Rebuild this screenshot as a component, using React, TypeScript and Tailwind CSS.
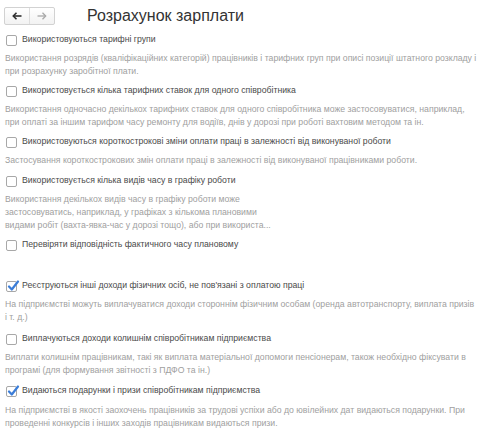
import React from "react";

function Box({ checked }: { checked?: boolean }) {
  return (
    <span className="relative inline-block w-[11px] h-[11px] shrink-0 rounded-[2px] border border-[#a8a8a8] bg-white">
      {checked && (
        <svg className="absolute left-[0px] top-[-2px]" width="13" height="12" viewBox="0 0 13 12">
          <path d="M2 6.5 L4.8 9.5 L11 1.5" fill="none" stroke="#3b7dd8" strokeWidth="2.2" strokeLinecap="round" strokeLinejoin="round" />
        </svg>
      )}
    </span>
  );
}

function Row({ label, checked, className = "" }: { label: string; checked?: boolean; className?: string }) {
  return (
    <div className={"flex items-center gap-[5px] h-[14px] pl-[6px] text-[8.7px] text-[#4a4a4a] " + className}>
      <Box checked={checked} />
      <span className="whitespace-nowrap">{label}</span>
    </div>
  );
}

function Desc({ lines, className = "" }: { lines: string[]; className?: string }) {
  return (
    <div className={"mt-[5px] pl-[5px] text-[8.7px] leading-[13px] text-[#a0a0a0] " + className}>
      {lines.map((l, i) => (
        <div key={i} className="whitespace-nowrap">{l}</div>
      ))}
    </div>
  );
}

export default function App() {
  return (
    <div className="w-[504px] h-[428px] overflow-hidden bg-white" style={{ fontFamily: '"Liberation Sans", Arial, sans-serif' }}>
      <div className="flex items-center h-[32px] pl-[4px]">
        <div className="flex h-[18px] w-[51px] rounded-[2px] border border-[#d2d2d2] bg-gradient-to-b from-white to-[#f2f2f2]">
          <div className="flex flex-1 items-center justify-center border-r border-[#dedede]">
            <svg width="10" height="8" viewBox="0 0 10 8">
              <path d="M1.5 4 H9.5" stroke="#2e2e2e" strokeWidth="1.6" />
              <path d="M4.5 0.8 L1.3 4 L4.5 7.2" fill="none" stroke="#2e2e2e" strokeWidth="1.6" />
            </svg>
          </div>
          <div className="flex flex-1 items-center justify-center">
            <svg width="10" height="8" viewBox="0 0 10 8">
              <path d="M0.5 4 H8.5" stroke="#a8a8a8" strokeWidth="1.3" />
              <path d="M5.5 0.8 L8.7 4 L5.5 7.2" fill="none" stroke="#a8a8a8" strokeWidth="1.3" />
            </svg>
          </div>
        </div>
        <div className="ml-[32px] text-[16px] text-[#333]">Розрахунок зарплати</div>
      </div>

      <div className="flex flex-col pt-[1px]">
        <Row label="Використовуються тарифні групи" />
        <Desc
          lines={[
            "Використання розрядів (кваліфікаційних категорій) працівників і тарифних груп при описі позиції штатного розкладу і",
            "при розрахунку заробітної плати.",
          ]}
        />

        <Row className="mt-[6px]" label="Використовується кілька тарифних ставок для одного співробітника" />
        <Desc
          lines={[
            "Використання одночасно декількох тарифних ставок для одного співробітника може застосовуватися, наприклад,",
            "при оплаті за іншим тарифом часу ремонту для водіїв, днів у дорозі при роботі вахтовим методом та ін.",
          ]}
        />

        <Row className="mt-[6px]" label="Використовуються короткострокові зміни оплати праці в залежності від виконуваної роботи" />
        <Desc lines={["Застосування короткострокових змін оплати праці в залежності від виконуваної працівниками роботи."]} />

        <Row className="mt-[7px]" label="Використовується кілька видів часу в графіку роботи" />
        <Desc
          lines={[
            "Використання декількох видів часу в графіку роботи може",
            "застосовуватись, наприклад, у графіках з кількома плановими",
            "видами робіт (вахта-явка-час у дорозі тощо), або при використа...",
          ]}
        />

        <Row className="mt-[6px]" label="Перевіряти відповідність фактичного часу плановому" />

        <Row className="mt-[27px]" checked label="Реєструються інші доходи фізичних осіб, не пов'язані з оплатою праці" />
        <Desc
          lines={[
            "На підприємстві можуть виплачуватися доходи стороннім фізичним особам (оренда автотранспорту, виплата призів",
            "і т. д.)",
          ]}
        />

        <Row className="mt-[8px]" label="Виплачуються доходи колишнім співробітникам підприємства" />
        <Desc
          lines={[
            "Виплати колишнім працівникам, такі як виплата матеріальної допомоги пенсіонерам, також необхідно фіксувати в",
            "програмі (для формування звітності з ПДФО та ін.)",
          ]}
        />

        <Row className="mt-[7px]" checked label="Видаються подарунки і призи співробітникам підприємства" />
        <Desc
          className="mt-[6px]"
          lines={[
            "На підприємстві в якості заохочень працівників за трудові успіхи або до ювілейних дат видаються подарунки. При",
            "проведенні конкурсів і інших заходів працівникам видаються призи.",
          ]}
        />
      </div>
    </div>
  );
}
